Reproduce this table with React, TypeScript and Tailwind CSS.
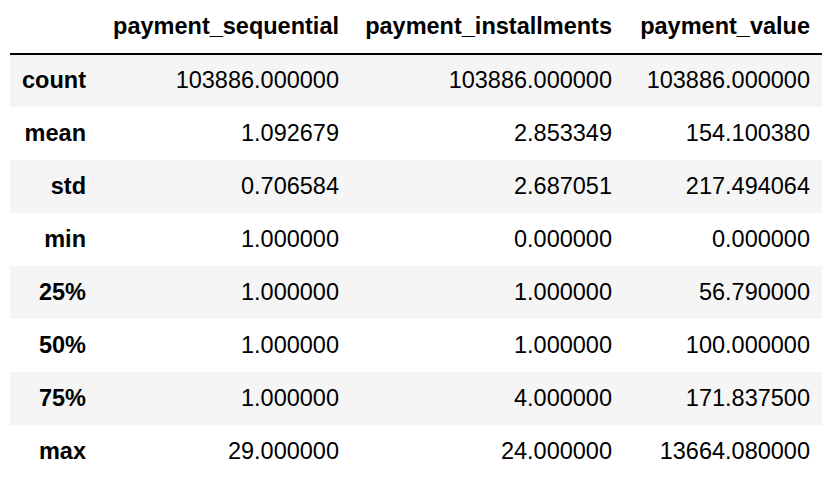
import React from "react";

interface StatRow {
  label: string;
  values: string[];
}

const columns = ["payment_sequential", "payment_installments", "payment_value"];

const rows: StatRow[] = [
  { label: "count", values: ["103886.000000", "103886.000000", "103886.000000"] },
  { label: "mean", values: ["1.092679", "2.853349", "154.100380"] },
  { label: "std", values: ["0.706584", "2.687051", "217.494064"] },
  { label: "min", values: ["1.000000", "0.000000", "0.000000"] },
  { label: "25%", values: ["1.000000", "1.000000", "56.790000"] },
  { label: "50%", values: ["1.000000", "1.000000", "100.000000"] },
  { label: "75%", values: ["1.000000", "4.000000", "171.837500"] },
  { label: "max", values: ["29.000000", "24.000000", "13664.080000"] },
];

const App: React.FC = () => {
  return (
    <div className="w-[836px] h-[478px] bg-white overflow-hidden pl-[10px] font-['Liberation_Sans',Arial,sans-serif] text-black text-[23.5px]">
      <table className="table-fixed border-collapse w-[812px]">
        <colgroup>
          <col className="w-[88px]" />
          <col className="w-[253px]" />
          <col className="w-[273px]" />
          <col className="w-[198px]" />
        </colgroup>
        {/* Header */}
        <thead>
          <tr className="h-[54px] border-b-2 border-black">
            <th className="px-3"></th>
            {columns.map((col) => (
              <th key={col} className="px-3 text-right font-bold whitespace-nowrap">
                {col}
              </th>
            ))}
          </tr>
        </thead>
        {/* Stats rows */}
        <tbody>
          {rows.map((row, index) => (
            <tr key={row.label} className={`h-[53px] ${index % 2 === 0 ? "bg-[#f5f5f5]" : "bg-white"}`}>
              <th className="px-3 text-right font-bold whitespace-nowrap">{row.label}</th>
              {row.values.map((v, i) => (
                <td key={i} className="px-3 text-right whitespace-nowrap">
                  {v}
                </td>
              ))}
            </tr>
          ))}
        </tbody>
      </table>
    </div>
  );
};

export default App;
